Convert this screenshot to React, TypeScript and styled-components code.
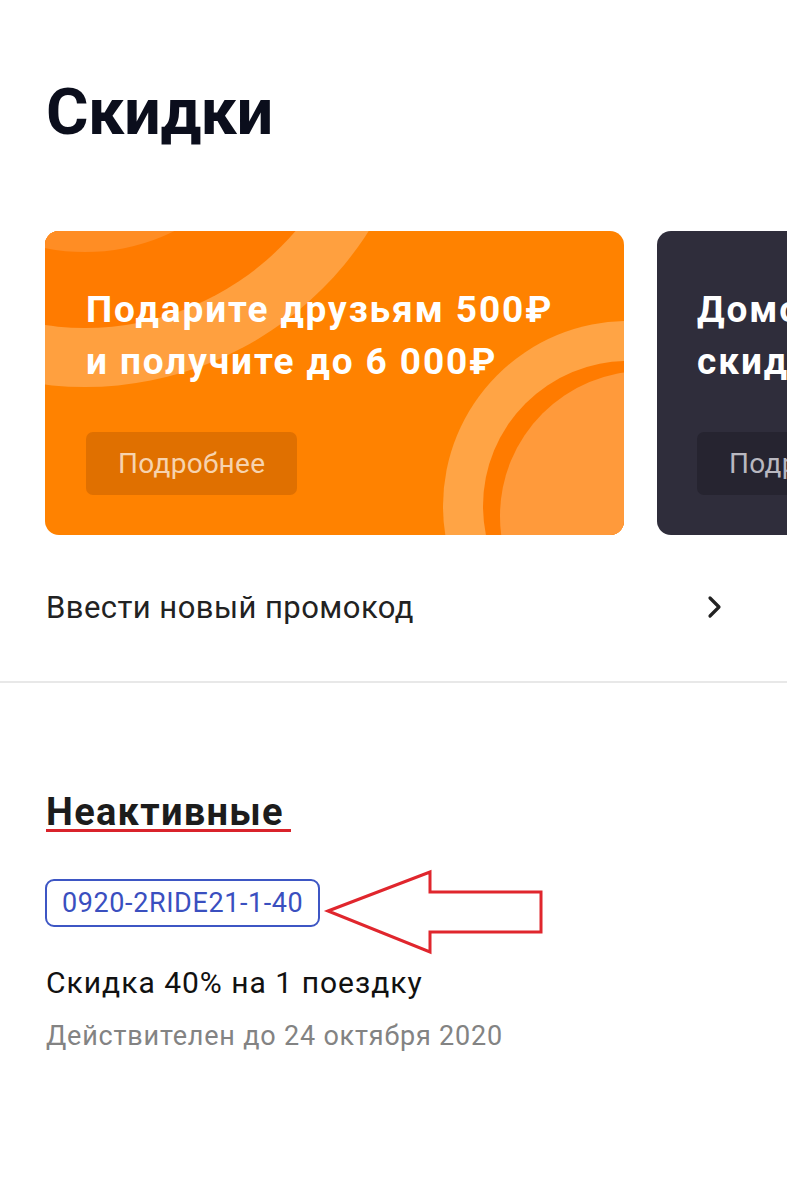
import React from 'react';
import styled, { createGlobalStyle } from 'styled-components';

const GlobalStyle = createGlobalStyle`
  html, body {
    margin: 0;
    padding: 0;
    background: #fff;
  }
  body {
    font-family: Roboto, 'Liberation Sans', Arial, sans-serif;
    color: #1f1f1f;
    overflow-x: hidden;
  }
`;

const Page = styled.div`
  width: 787px;
  min-height: 1200px;
  overflow: hidden;
`;

const Title = styled.h1`
  margin: 72px 0 0 46px;
  font-size: 65px;
  line-height: 80px;
  font-weight: 700;
  color: #0b0e1c;
  letter-spacing: -0.5px;
`;

const Carousel = styled.div`
  display: flex;
  gap: 33px;
  margin-top: 79px;
  padding-left: 45px;
  overflow: hidden;
`;

const Card = styled.div<{ $dark?: boolean }>`
  position: relative;
  flex-shrink: 0;
  width: 579px;
  height: 304px;
  box-sizing: border-box;
  padding: 53px 0 0 ${(p) => (p.$dark ? 40 : 41)}px;
  border-radius: 14px;
  overflow: hidden;
  background: ${(p) => (p.$dark ? '#2f2d3b' : '#ff8200')};
`;

const Decor = styled.svg`
  position: absolute;
  inset: 0;
  width: 100%;
  height: 100%;
`;

const CardText = styled.div`
  position: relative;
  font-size: 37px;
  line-height: 52px;
  font-weight: 700;
  letter-spacing: 1.9px;
  color: #fff;
  white-space: nowrap;
`;

const MoreButton = styled.div<{ $dark?: boolean }>`
  position: relative;
  display: inline-flex;
  align-items: center;
  height: 63px;
  margin-top: 44px;
  padding: 0 32px;
  border-radius: 7px;
  font-size: 28px;
  letter-spacing: 0.3px;
  color: ${(p) => (p.$dark ? '#b9b8c0' : '#f7d3ae')};
  background: ${(p) => (p.$dark ? '#262430' : '#e07000')};
`;

const PromoRow = styled.div`
  display: flex;
  align-items: center;
  justify-content: space-between;
  height: 90px;
  margin-top: 27px;
  padding: 0 64px 0 46px;
  font-size: 31px;
  letter-spacing: 0.45px;
  color: #222;
`;

const Divider = styled.div`
  height: 2px;
  margin-top: 29px;
  background: #e8e8e8;
`;

const Section = styled.div`
  padding: 112px 0 0 46px;
`;

const SectionTitle = styled.h2`
  display: inline-block;
  margin: 0;
  padding-right: 7px;
  font-size: 38px;
  line-height: 34px;
  font-weight: 700;
  letter-spacing: 1.3px;
  color: #1c1c1c;
  border-bottom: 3px solid #d9232b;
`;

const CodeRow = styled.div`
  position: relative;
  margin-top: 47px;
  height: 48px;
`;

const Code = styled.div`
  display: inline-flex;
  align-items: center;
  box-sizing: border-box;
  height: 48px;
  margin-left: -1px;
  padding: 0 15px;
  border: 2px solid #3d56c4;
  border-radius: 9px;
  font-size: 27px;
  letter-spacing: 0.6px;
  color: #3a4fbf;
`;

const Pointer = styled.svg`
  position: absolute;
  left: 232px;
  top: -10px;
`;

const Discount = styled.div`
  margin-top: 36px;
  font-size: 30px;
  line-height: 40px;
  letter-spacing: 1px;
  color: #111;
`;

const Valid = styled.div`
  margin-top: 13px;
  font-size: 27px;
  line-height: 40px;
  letter-spacing: 0.8px;
  color: #838383;
`;

const Chevron = () => (
  <svg width="16" height="24" viewBox="0 0 16 24">
    <polyline points="3,3 12,12 3,21" fill="none" stroke="#222" strokeWidth="3.2" strokeLinecap="round" strokeLinejoin="round" />
  </svg>
);

const OrangeDecor = () => (
  <Decor viewBox="0 0 579 304" preserveAspectRatio="none">
    <circle cx="40" cy="-180" r="336" fill="#ffa03f" />
    <circle cx="40" cy="-180" r="277" fill="#ff7b00" />
    <circle cx="40" cy="-180" r="201" fill="#ff8d24" />
    <circle cx="583" cy="275" r="185" fill="#ffa445" />
    <circle cx="583" cy="275" r="145" fill="#ff7b00" />
    <circle cx="600" cy="285" r="145" fill="#ff9a3b" />
  </Decor>
);

export default function App() {
  return (
    <Page>
      <GlobalStyle />
      <Title>Скидки</Title>
      <Carousel>
        <Card>
          <OrangeDecor />
          <CardText>
            Подарите друзьям 500₽
            <br />
            и получите до 6 000₽
          </CardText>
          <MoreButton>Подробнее</MoreButton>
        </Card>
        <Card $dark>
          <CardText>
            Домой и обратно
            <br />
            скидка 20%
          </CardText>
          <MoreButton $dark>Подробнее</MoreButton>
        </Card>
      </Carousel>
      <PromoRow>
        <span>Ввести новый промокод</span>
        <Chevron />
      </PromoRow>
      <Divider />
      <Section>
        <SectionTitle>Неактивные</SectionTitle>
        <CodeRow>
          <Code>0920-2RIDE21-1-40</Code>
          <Pointer width="275" height="90" viewBox="0 0 275 90">
            <polygon
              points="50,42 152,3 152,23 263,23 263,63 152,63 152,83"
              fill="none"
              stroke="#e0262d"
              strokeWidth="3"
              strokeLinejoin="miter"
            />
          </Pointer>
        </CodeRow>
        <Discount>Скидка 40% на 1 поездку</Discount>
        <Valid>Действителен до 24 октября 2020</Valid>
      </Section>
    </Page>
  );
}
